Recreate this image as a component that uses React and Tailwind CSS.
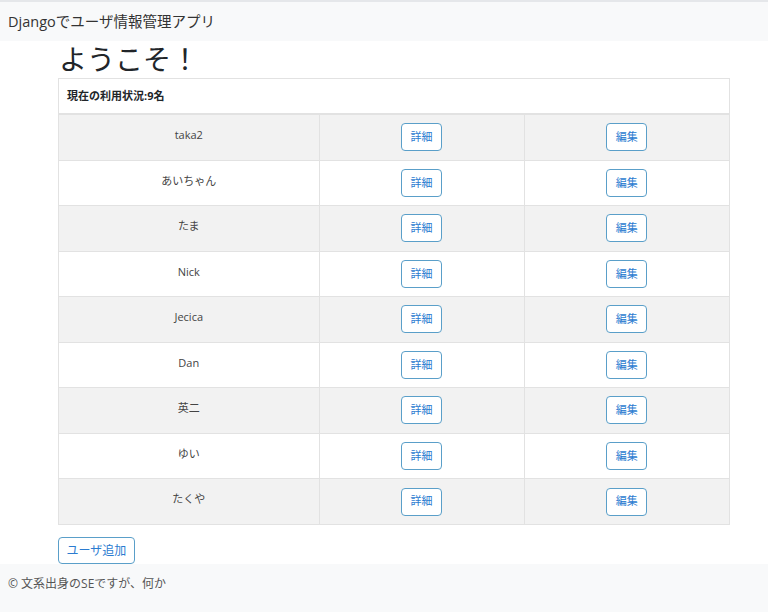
export default function App() {
  const users = ["taka2", "あいちゃん", "たま", "Nick", "Jecica", "Dan", "英二", "ゆい", "たくや"];
  const font = { fontFamily: '"Open Sans", "Noto Sans CJK JP", sans-serif' };

  return (
    <div className="min-h-[612px] bg-white text-[#212529] flex flex-col" style={font}>
      <header className="border-t-2 border-[#e5e7ea] bg-[#f8f9fa] h-[41px] flex items-center px-2">
        <span className="text-[14.5px] text-[#333]">Djangoでユーザ情報管理アプリ</span>
      </header>

      <main className="pl-[58px] pr-[38px]">
        <h1 className="text-[28px] leading-[36px] ml-[1px] mb-[1px]">ようこそ！</h1>

        <div className="border border-[#e2e2e2]">
          <div className="h-[35px] flex items-center px-2 text-[11px] font-bold border-b border-[#e2e2e2]">
            現在の利用状況:{users.length}名
          </div>
          <table className="w-full border-collapse text-[11px] text-[#444]">
            <tbody>
              {users.map((u, i) => (
                <tr key={u} className={i % 2 === 0 ? "bg-[#f2f2f2]" : "bg-white"}>
                  <td className="w-[260px] h-[45.5px] align-top pt-[12px] text-center border-r border-t border-[#e2e2e2]">
                    {u}
                  </td>
                  <td className="w-[205px] align-middle text-center border-r border-t border-[#e2e2e2]">
                    <button className="h-[28px] w-[41px] text-[11px] text-[#2b7bd0] border border-[#5a9fc9] rounded-[4px] bg-white">
                      詳細
                    </button>
                  </td>
                  <td className="align-middle text-center border-t border-[#e2e2e2]">
                    <button className="h-[28px] w-[41px] text-[11px] text-[#2b7bd0] border border-[#5a9fc9] rounded-[4px] bg-white">
                      編集
                    </button>
                  </td>
                </tr>
              ))}
            </tbody>
          </table>
        </div>

        <div className="pt-[12px]">
          <button className="block h-[27px] w-[77px] text-[12px] text-[#2b7bd0] border border-[#5a9fc9] rounded-[4px] bg-white">
            ユーザ追加
          </button>
        </div>
      </main>

      <footer className="flex-1 bg-[#f8f9fa] px-2 pt-[12px]">
        <p className="text-[12px] leading-[16px] text-[#555]">© 文系出身のSEですが、何か</p>
      </footer>
    </div>
  );
}
